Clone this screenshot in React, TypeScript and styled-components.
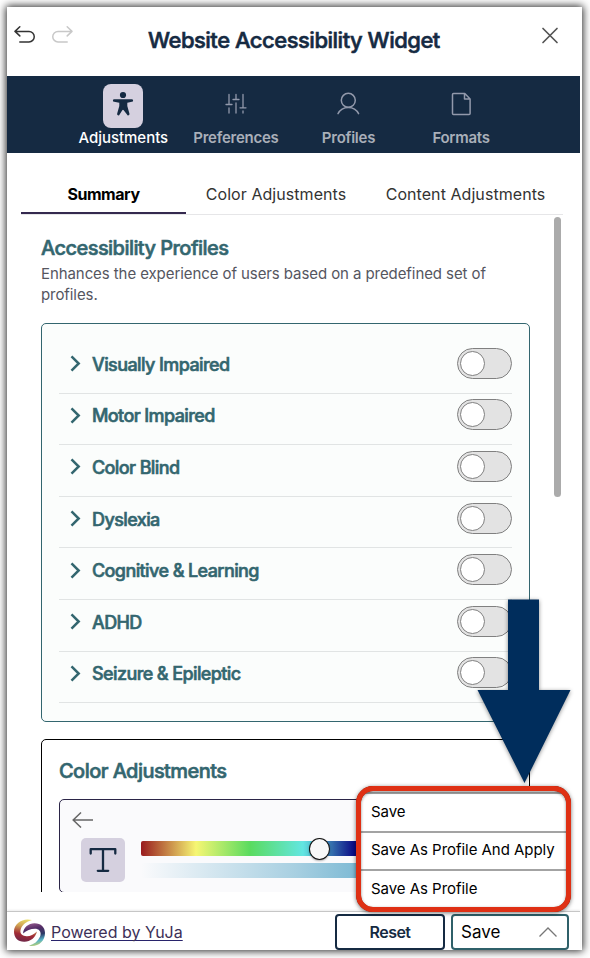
import React from "react";
import styled, { createGlobalStyle } from "styled-components";

const navy = "#152a42";
const teal = "#33666f";

const GlobalStyle = createGlobalStyle`
  * { box-sizing: border-box; }
  html, body { margin: 0; padding: 0; background: #fff; overflow: hidden; }
  body { font-family: Inter, "Liberation Sans", sans-serif; }
  button { font-family: inherit; margin: 0; padding: 0; border: 0; background: none; }
  h1, h2, p { margin: 0; }
  svg { display: block; }
`;

const Stage = styled.div`
  position: relative;
  width: 590px;
  height: 958px;
  padding: 7px 8px 8px 7px;
  overflow: hidden;
`;

const Widget = styled.main`
  width: 575px;
  height: 943px;
  display: flex;
  flex-direction: column;
  background: #fff;
  box-shadow: 0 0 8px 1px rgba(0, 0, 0, 0.85);
  overflow: hidden;
`;

const Header = styled.header`
  display: flex;
  align-items: flex-start;
  height: 69px;
  flex: none;
  padding: 17px 22px 0 7px;
`;

const History = styled.div`
  display: flex;
  gap: 14px;
  width: 134px;
`;

const Title = styled.h1`
  flex: 1;
  font-size: 22px;
  line-height: 32px;
  font-weight: 500;
  letter-spacing: -0.5px;
  -webkit-text-stroke: 0.6px ${navy};
  white-space: nowrap;
  color: ${navy};
`;

const CloseButton = styled.button`
  margin-top: 2px;
`;

const Nav = styled.nav`
  display: grid;
  grid-template-columns: repeat(4, 112.6px);
  width: 573px;
  height: 77px;
  flex: none;
  padding: 8px 0 0 60px;
  background: ${navy};
`;

const NavItem = styled.button<{ $active?: boolean }>`
  display: flex;
  flex-direction: column;
  align-items: center;
  font-size: 15px;
  line-height: 20px;
  font-weight: ${(p) => (p.$active ? 500 : 600)};
  color: ${(p) => (p.$active ? "#fff" : "#a9afb9")};
  letter-spacing: ${(p) => (p.$active ? "-0.03px" : "-0.25px")};
`;

const NavIcon = styled.span<{ $active?: boolean }>`
  display: grid;
  place-items: center;
  width: 40px;
  height: 44px;
  padding-bottom: 4px;
  border-radius: 8px;
  background: ${(p) => (p.$active ? "#d5d0df" : "transparent")};
`;

const Tabs = styled.div`
  display: flex;
  width: 542px;
  height: 62px;
  flex: none;
  margin-left: 14px;
  border-bottom: 1px solid #e6e6e8;
`;

const Tab = styled.button<{ $active?: boolean; $width: number }>`
  flex: none;
  width: ${(p) => p.$width}px;
  height: 61px;
  padding-top: 22px;
  font-size: 16px;
  white-space: nowrap;
  font-weight: ${(p) => (p.$active ? 700 : 400)};
  letter-spacing: ${(p) => (p.$active ? "-0.45px" : "0.06px")};
  color: ${(p) => (p.$active ? "#000" : "#333")};
  border-bottom: 2px solid ${(p) => (p.$active ? "#35294f" : "transparent")};
`;

const Body = styled.div`
  display: flex;
  gap: 24px;
  height: 677px;
  flex: none;
  padding-left: 34px;
  overflow: hidden;
`;

const Content = styled.div`
  width: 489px;
  flex: none;
`;

const ScrollThumb = styled.div`
  width: 7px;
  height: 280px;
  margin-top: 2px;
  border-radius: 4px;
  background: #ababab;
`;

const SectionTitle = styled.h2`
  font-size: 20px;
  line-height: 26px;
  font-weight: 500;
  letter-spacing: -0.55px;
  -webkit-text-stroke: 0.6px ${teal};
  color: ${teal};
`;

const Intro = styled.div`
  height: 108px;
  padding-top: 20px;
`;

const Description = styled.p`
  font-size: 15px;
  line-height: 21px;
  letter-spacing: -0.08px;
  margin-top: 2px;
  color: #55565f;
`;

const ProfilePanel = styled.section`
  height: 399px;
  padding: 18px 17px 0;
  border: 1px solid ${teal};
  border-radius: 5px;
  background: #fbfdfc;
`;

const ProfileRow = styled.div`
  display: flex;
  align-items: center;
  height: 51.6px;
  padding: 0 0 8px 10px;
  border-bottom: 1px solid #e1e4e4;
`;

const ProfileName = styled.span`
  flex: 1;
  margin-left: 9px;
  padding-top: 3px;
  font-size: 18px;
  line-height: 24px;
  font-weight: 500;
  letter-spacing: -0.6px;
  -webkit-text-stroke: 0.6px ${teal};
  color: ${teal};
`;

const Toggle = styled.button`
  display: flex;
  align-items: center;
  width: 55px;
  height: 31px;
  padding-left: 2px;
  border: 1px solid #808080;
  border-radius: 16px;
  background: #e3e3e3;
`;

const Knob = styled.span`
  width: 25px;
  height: 25px;
  border: 1px solid #808080;
  border-radius: 50%;
  background: #fff;
`;

const ColorPanel = styled.section`
  height: 220px;
  margin-top: 17px;
  padding: 18px 17px 0;
  border: 1px solid #000;
  border-radius: 5px;
`;

const ColorCard = styled.div`
  height: 94px;
  margin-top: 15px;
  padding: 12px 0 0 12px;
  border: 1px solid #2b2547;
  border-radius: 5px;
  background: #fafafc;
`;

const Controls = styled.div`
  display: flex;
  gap: 16px;
  margin: 10px 0 0 9px;
`;

const TextTile = styled.div`
  display: grid;
  place-items: center;
  width: 44px;
  height: 44px;
  border-radius: 5px;
  background: #d5d0df;
`;

const Sliders = styled.div`
  display: flex;
  flex-direction: column;
  gap: 7px;
  width: 300px;
  padding-top: 3px;
`;

const HueTrack = styled.div`
  display: flex;
  align-items: center;
  height: 15px;
  padding-left: 168px;
  border-radius: 2px;
  background: linear-gradient(90deg, #991b1e 0, #f6f673 55px, #5adb5f 109px, #62e6e2 162px, #3c83b5 186px, #0b0b86 213px);
`;

const ShadeTrack = styled.div`
  height: 15px;
  background: linear-gradient(90deg, #fafafc 0, #a7cfe1 155px, #7ab8d3 222px);
`;

const HueThumb = styled.span`
  width: 21px;
  height: 22px;
  flex: none;
  border: 1px solid #111;
  border-radius: 50%;
  background: #f8f8f8;
  box-shadow: 0 1px 2px rgba(0, 0, 0, 0.3);
`;

const Footer = styled.footer`
  display: flex;
  align-items: flex-start;
  height: 39px;
  flex: none;
  margin-top: 19px;
  padding-left: 7px;
  width: 573px;
  border-top: 1px solid #c6c6c6;
  box-shadow: 0 -1px 2px rgba(0, 0, 0, 0.08);
`;

const Brand = styled.div`
  display: flex;
  width: 321px;
  padding-top: 7px;
  gap: 6px;
`;

const BrandLink = styled.a`
  padding-top: 1px;
  font-size: 16px;
  line-height: 24px;
  color: #3d3057;
  text-decoration: underline;
  text-decoration-color: #28236b;
  text-decoration-thickness: 1px;
  text-underline-offset: 2px;
  text-decoration-skip-ink: none;
`;

const ResetButton = styled.button`
  width: 110px;
  height: 36px;
  margin: 2px 6px 0 0;
  border: 2px solid ${navy};
  border-radius: 4px;
  font-size: 16px;
  font-weight: 600;
  letter-spacing: -0.55px;
  color: ${navy};
`;

const SaveButton = styled.button`
  display: flex;
  align-items: center;
  justify-content: space-between;
  width: 118px;
  height: 36px;
  margin-top: 2px;
  padding: 0 9px 0 8px;
  border: 2px solid #2f6069;
  border-radius: 4px;
  font-size: 17px;
  color: #000;
`;

const SaveMenu = styled.div`
  position: absolute;
  left: 356px;
  top: 786px;
  display: flex;
  flex-direction: column;
  width: 215px;
  height: 126px;
  padding: 1px 0 0;
  overflow: hidden;
  border: 5px solid #df3014;
  border-radius: 17px;
  background: #fff;
`;

const MenuHalo = styled.div`
  position: absolute;
  left: 356px;
  top: 786px;
  width: 215px;
  height: 126px;
  border-radius: 17px;
  box-shadow: 0 1px 4px rgba(0, 0, 0, 0.55), inset 0 0 0 5px #df3014, inset 0 1px 3px 5px rgba(0, 0, 0, 0.45);
`;

const MenuItem = styled.button`
  display: flex;
  align-items: center;
  height: 38.5px;
  flex: none;
  padding: 0 0 2px 10px;
  border-top: 2px solid #a3a3a3;
  font-size: 15px;
  letter-spacing: -0.04px;
  color: #000;
`;

const Pointer = styled.svg`
  position: absolute;
  left: 470px;
  top: 592px;
  filter: drop-shadow(0 1px 2px rgba(0, 0, 0, 0.45));
`;

const UndoIcon = ({ color, flip }: { color: string; flip?: boolean }) => (
  <svg width="23" height="22" viewBox="0 0 23 22" fill="none" stroke={color} strokeWidth="1.5" strokeLinecap="round" strokeLinejoin="round">
    <g transform={flip ? "translate(22 0) scale(-1 1)" : undefined}>
      <path d="M5.800 2.800 1 7.400l4.800 4.500M1.300 7.400H15a5.250 5.250 0 0 1 0 10.500H5.800" />
    </g>
  </svg>
);

const PersonIcon = () => (
  <svg width="22" height="28" viewBox="0 0 22 28" fill={navy}>
    <circle cx="11" cy="5" r="3.100" />
    <path d="M2.300 9.200h17.400a1.300 1.300 0 0 1 .2 2.600l-4.600 1v3.100l2.100 7.700a1.300 1.300 0 0 1-2.400 1L11.700 20.200a.8.8 0 0 0-1.400 0L7.600 24.600a1.300 1.300 0 0 1-2.400-1l2.100-7.700v-3.100l-5.200-1A1.300 1.300 0 0 1 2.300 9.200Z" />
  </svg>
);

const SlidersIcon = () => (
  <svg width="24" height="28" viewBox="0 0 24 28" fill="none" stroke="#9299ab" strokeWidth="1.300" strokeLinecap="round">
    <path d="M5 4.500v10M2 14.500h6M5 18v5M12 4.500v5M9 9.500h6M12 13v10M19 4.500v13M16 17.800h6M19 21v2" />
  </svg>
);

const UserIcon = () => (
  <svg width="26" height="28" viewBox="0 0 26 28" fill="none" stroke="#9299ab" strokeWidth="1.500" strokeLinecap="round">
    <circle cx="13.300" cy="10.300" r="7" />
    <path d="M3 23.700c2-4.100 5.500-6.300 10.300-6.300s8.300 2.200 10.300 6.300" />
  </svg>
);

const FileIcon = () => (
  <svg width="24" height="28" viewBox="0 0 24 28" fill="none" stroke="#9299ab" strokeWidth="1.500" strokeLinejoin="round">
    <path d="M4.500 3.500h11.300l5.300 5.500v14.500a1 1 0 0 1-1 1H4.500a1 1 0 0 1-1-1v-19a1 1 0 0 1 1-1ZM15.500 3.700V9H21" />
  </svg>
);

const Chevron = () => (
  <svg width="14" height="18" viewBox="0 0 14 18" fill="none" stroke={teal} strokeWidth="2.500">
    <path d="m2.500 2.300 7.200 7.200-7.200 7.200" />
  </svg>
);

const LogoIcon = () => (
  <svg width="31" height="28" viewBox="0 0 31 28">
    <defs>
      <linearGradient id="warm" x1="0.700" y1="0" x2="0.500" y2="1">
        <stop offset="0" stopColor="#ece36a" />
        <stop offset=".35" stopColor="#cfa153" />
        <stop offset=".7" stopColor="#a12b35" />
        <stop offset="1" stopColor="#722748" />
      </linearGradient>
      <linearGradient id="cool" x1="0.300" y1="0" x2="0.500" y2="1">
        <stop offset="0" stopColor="#93598b" />
        <stop offset=".25" stopColor="#562d66" />
        <stop offset=".55" stopColor="#2b3967" />
        <stop offset=".8" stopColor="#55b4c9" />
        <stop offset="1" stopColor="#b7ce75" />
      </linearGradient>
    </defs>
    <path d="M18 1C9-1.500 0 4.200 0 12.500 0 19 4 23 10.500 22.800c6-.3 10.800-3.800 12.500-10.300-3.500 3.300-7 5-10.500 4.800-5-.2-7.300-3.300-5.500-7.800C8.300 6 12 2.800 18 1Z" fill="url(#warm)" />
    <path d="M9 14.500C9.500 8.500 14.500 4.300 20.500 4.300c6.500 0 10.500 4.200 10.500 9.700 0 8.300-7.300 14.500-16 12.800 5-1.500 9-4.500 11-9 1.800-4.500-.5-8-5-8.100-4.500 0-8.500 1.500-12 4.800Z" fill="url(#cool)" />
  </svg>
);

const profiles = [
  "Visually Impaired",
  "Motor Impaired",
  "Color Blind",
  "Dyslexia",
  "Cognitive & Learning",
  "ADHD",
  "Seizure & Epileptic",
];

const navItems = [
  { label: "Adjustments", icon: <PersonIcon />, active: true },
  { label: "Preferences", icon: <SlidersIcon /> },
  { label: "Profiles", icon: <UserIcon /> },
  { label: "Formats", icon: <FileIcon /> },
];

export default function App() {
  return (
    <Stage>
      <GlobalStyle />
      <Widget>
        <Header>
          <History>
            <button aria-label="Undo"><UndoIcon color="#333" /></button>
            <button aria-label="Redo"><UndoIcon color="#c8c8c8" flip /></button>
          </History>
          <Title>Website Accessibility Widget</Title>
          <CloseButton aria-label="Close">
            <svg width="20" height="20" viewBox="0 0 20 20" stroke="#555" strokeWidth="1.700" strokeLinecap="round">
              <path d="m3 2.500 14 14M17 2.500l-14 14" />
            </svg>
          </CloseButton>
        </Header>
        <Nav>
          {navItems.map((item) => (
            <NavItem key={item.label} $active={item.active}>
              <NavIcon $active={item.active}>{item.icon}</NavIcon>
              {item.label}
            </NavItem>
          ))}
        </Nav>
        <Tabs>
          <Tab $active $width={165}>Summary</Tab>
          <Tab $width={180}>Color Adjustments</Tab>
          <Tab $width={199}>Content Adjustments</Tab>
        </Tabs>
        <Body>
          <Content>
            <Intro>
              <SectionTitle>Accessibility Profiles</SectionTitle>
              <Description>Enhances the experience of users based on a predefined set of profiles.</Description>
            </Intro>
            <ProfilePanel>
              {profiles.map((name) => (
                <ProfileRow key={name}>
                  <Chevron />
                  <ProfileName>{name}</ProfileName>
                  <Toggle role="switch" aria-checked={false} aria-label={name}><Knob /></Toggle>
                </ProfileRow>
              ))}
            </ProfilePanel>
            <ColorPanel>
              <SectionTitle>Color Adjustments</SectionTitle>
              <ColorCard>
                <svg width="23" height="16" viewBox="0 0 23 16" fill="none" stroke="#666" strokeWidth="1.500">
                  <path d="M9 .5 1.200 8 9 15.500M1.200 8H21" />
                </svg>
                <Controls>
                  <TextTile>
                    <svg width="30" height="28" viewBox="0 0 30 28" fill="none" stroke={navy} strokeWidth="2.300" strokeLinecap="round" strokeLinejoin="round">
                      <path d="M2.700 7.500V3.200h24.600v4.300M15 3.200v21.600M9.800 24.800h10.400" />
                    </svg>
                  </TextTile>
                  <Sliders>
                    <HueTrack><HueThumb /></HueTrack>
                    <ShadeTrack />
                  </Sliders>
                </Controls>
              </ColorCard>
            </ColorPanel>
          </Content>
          <ScrollThumb />
        </Body>
        <Footer>
          <Brand>
            <LogoIcon />
            <BrandLink>Powered by YuJa</BrandLink>
          </Brand>
          <ResetButton>Reset</ResetButton>
          <SaveButton>
            Save
            <svg width="20" height="12" viewBox="0 0 20 12" fill="none" stroke="#777" strokeWidth="1.300">
              <path d="m1.500 10.500 8.500-8.500 8.500 8.500" />
            </svg>
          </SaveButton>
        </Footer>
      </Widget>
      <SaveMenu>
        <MenuItem>Save</MenuItem>
        <MenuItem>Save As Profile And Apply</MenuItem>
        <MenuItem>Save As Profile</MenuItem>
      </SaveMenu>
      <MenuHalo />
      <Pointer width="112" height="200" viewBox="0 0 112 200">
        <path d="M38 7.500h31v90.500h31.500L54.500 191 7.500 98H38Z" fill="#002d5c" />
      </Pointer>
    </Stage>
  );
}
